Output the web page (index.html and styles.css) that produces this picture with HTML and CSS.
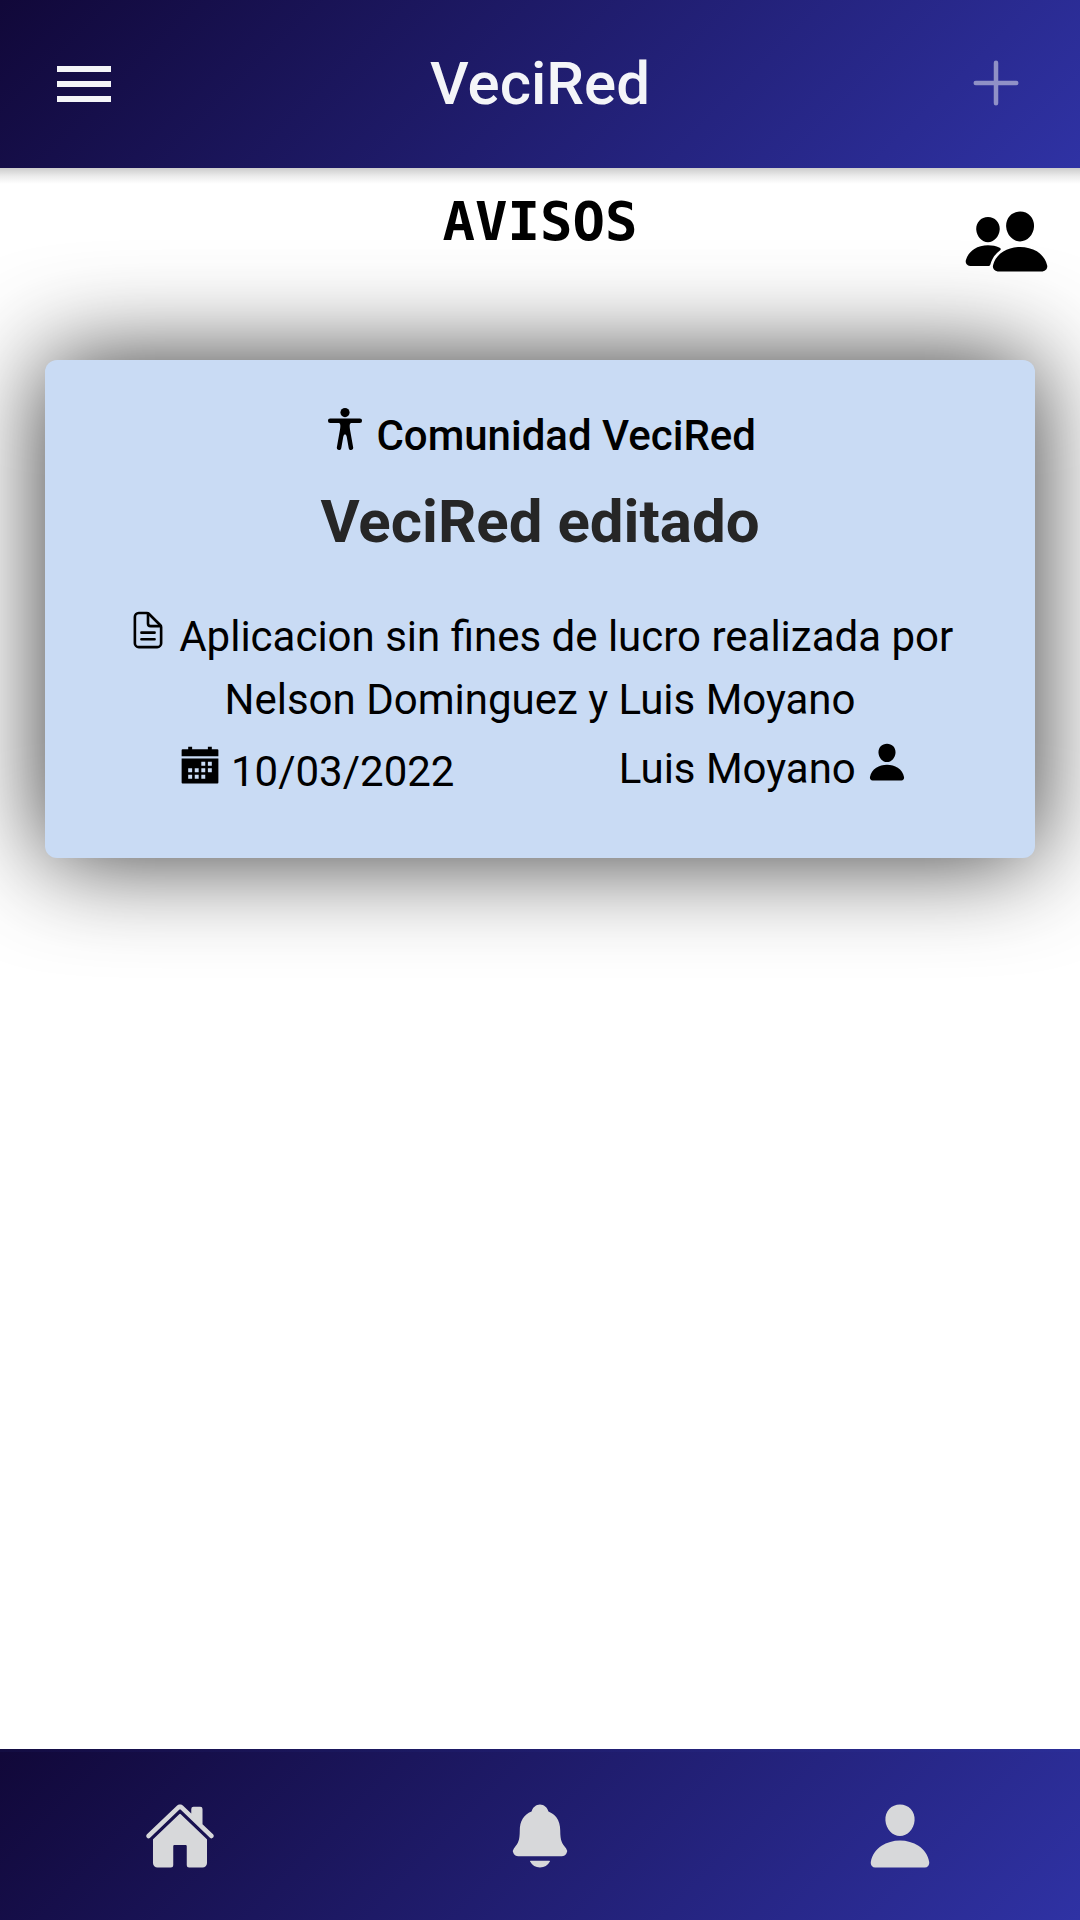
FILE: index.html
```html
<!DOCTYPE html>
<html lang="es">
<head>
<meta charset="utf-8">
<meta name="viewport" content="width=device-width, initial-scale=1">
<title>VeciRed</title>
<link rel="stylesheet" href="styles.css">
</head>
<body>
<header class="toolbar">
  <button class="toolbar-button" type="button" aria-label="Menú">
    <svg class="icon-large" viewBox="0 0 72 72" aria-hidden="true"><path d="M9 18h54v6H9zM9 33h54v6H9zM9 48h54v6H9z"/></svg>
  </button>
  <div class="brand">VeciRed</div>
  <button class="toolbar-button add-button" type="button" aria-label="Agregar">
    <svg class="icon-large" viewBox="0 0 512 512" aria-hidden="true"><path class="outline" d="M256 104v288M400 248H112"/></svg>
  </button>
</header>

<main class="content">
  <div class="page-heading">
    <h1 class="page-title">AVISOS</h1>
    <button class="people-button" type="button" aria-label="Comunidades">
      <svg class="people-icon" viewBox="0 0 512 512" aria-hidden="true"><path d="M336 256c-20.56 0-40.44-9.18-56-25.84-15.13-16.25-24.37-37.92-26-61-1.74-24.62 5.77-47.26 21.14-63.76S312 80 336 80c23.83 0 45.38 9.06 60.7 25.52 15.47 16.62 23 39.22 21.26 63.63-1.67 23.11-10.9 44.77-26 61C376.44 246.82 356.57 256 336 256zM467.83 432H204.18a27.71 27.71 0 01-22-10.67 30.22 30.22 0 01-5.26-25.79c8.42-33.81 29.28-61.85 60.32-81.08C264.79 297.4 299.86 288 336 288c36.85 0 71 9 98.71 26.05 31.11 19.13 52 47.33 60.38 81.55a30.27 30.27 0 01-5.32 25.78A27.68 27.68 0 01467.83 432zM147 260c-35.19 0-66.13-32.72-69-72.93-1.42-20.6 5-39.65 18-53.62 12.86-13.83 31-21.45 51-21.45s38 7.66 50.93 21.57c13.1 14.08 19.5 33.09 18 53.52-2.87 40.2-33.8 72.91-68.93 72.91zM212.66 291.45c-17.59-8.6-40.42-12.9-65.65-12.9-29.46 0-58.07 7.68-80.57 21.62-25.51 15.83-42.67 38.88-49.6 66.71a27.39 27.39 0 004.79 23.36A25.32 25.32 0 0041.72 400h111a8 8 0 007.87-6.57c.11-.63.25-1.26.41-1.88 8.48-34.06 28.35-62.84 57.71-83.82a8 8 0 00-.63-13.39c-1.57-.92-3.37-1.89-5.42-2.89z"/></svg>
    </button>
  </div>

  <article class="card">
    <p class="card-community"><svg class="icon" viewBox="0 0 512 512" aria-hidden="true"><circle cx="256" cy="56" r="56"/><path d="M437 128H75a27 27 0 000 54h101.88c6.91 0 15 3.09 19.58 15 5.35 13.83 2.73 40.54-.57 61.23l-4.32 24.45a.42.42 0 01-.12.35l-34.6 196.81A27.43 27.43 0 00179 511.58a27.06 27.06 0 0031.42-22.29l23.91-136.8S242 320 256 320c14.23 0 21.74 32.49 21.74 32.49l23.92 136.92a27.24 27.24 0 1053.62-9.6L320.66 283a.45.45 0 00-.11-.35l-4.33-24.45c-3.3-20.69-5.92-47.4-.57-61.23 4.56-11.88 12.91-15 19.26-15H437a27 27 0 000-54z"/></svg> Comunidad VeciRed</p>
    <h2 class="card-title">VeciRed editado</h2>
    <p class="card-text"><svg class="icon" viewBox="0 0 512 512" aria-hidden="true"><path class="outline" d="M416 221.25V416a48 48 0 01-48 48H144a48 48 0 01-48-48V96a48 48 0 0148-48h98.75a32 32 0 0122.62 9.37l141.26 141.26a32 32 0 019.37 22.62z"/><path class="outline" d="M256 56v120a32 32 0 0032 32h120M176 288h160M176 368h160"/></svg> Aplicacion sin fines de lucro realizada por Nelson Dominguez y Luis Moyano</p>
    <div class="card-meta">
      <div class="card-date"><svg class="icon" viewBox="0 0 512 512" aria-hidden="true"><path fill-rule="evenodd" d="M112 32h48v32h192V32h48v32h68a12 12 0 0112 12v72H32V76a12 12 0 0112-12h68zM32 176h448v292a12 12 0 01-12 12H44a12 12 0 01-12-12zM272 216v48h48v-48zM352 216v48h48v-48zM112 296v48h48v-48zM192 296v48h48v-48zM272 296v48h48v-48zM352 296v48h48v-48zM112 376v48h48v-48zM192 376v48h48v-48zM272 376v48h48v-48z"/></svg> <time datetime="2022-03-10">10/03/2022</time></div>
      <div class="card-author">Luis Moyano <svg class="icon" viewBox="0 0 512 512" aria-hidden="true"><path d="M332.64 64.58C313.18 43.57 286 32 256 32c-30.16 0-57.43 11.5-76.8 32.38-19.58 21.11-29.12 49.8-26.88 80.78C156.76 206.28 203.27 256 256 256s99.16-49.71 103.67-110.82c2.27-30.7-7.33-59.33-27.03-80.6zM432 480H80a31 31 0 01-24.2-11.13c-6.5-7.77-9.12-18.38-7.18-29.11C57.06 392.94 83.4 353.61 124.8 326c36.78-24.51 83.37-38 131.2-38s94.42 13.5 131.2 38c41.4 27.6 67.74 66.93 76.18 113.75 1.94 10.73-.68 21.34-7.18 29.11A31 31 0 01432 480z"/></svg></div>
    </div>
  </article>
</main>

<nav class="tabs" aria-label="Principal">
  <a class="tab" href="#inicio" aria-label="Inicio">
    <svg class="icon-large" viewBox="0 0 512 512" aria-hidden="true"><path d="M261.56 101.28a8 8 0 00-11.06 0L66.4 277.15a8 8 0 00-2.47 5.79L63.9 448a32 32 0 0032 32H192a16 16 0 0016-16V328a8 8 0 018-8h80a8 8 0 018 8v136a16 16 0 0016 16h96.06a32 32 0 0032-32V282.94a8 8 0 00-2.47-5.79z"/><path d="M490.91 244.15l-74.8-71.56V64a16 16 0 00-16-16h-48a16 16 0 00-16 16v32l-57.92-55.38C272.77 35.14 264.71 32 256 32c-8.68 0-16.72 3.14-22.14 8.63l-212.7 203.5c-6.22 6-7 15.87-1.34 22.37A16 16 0 0043 267.56L250.5 69.28a8 8 0 0111.06 0l207.52 198.28a16 16 0 0022.59-.44c6.14-6.36 5.63-16.86-.76-22.97z"/></svg>
  </a>
  <a class="tab" href="#avisos" aria-label="Avisos">
    <svg class="icon-large" viewBox="0 0 512 512" aria-hidden="true"><path d="M440.08 341.31c-1.66-2-3.29-4-4.89-5.93-22-26.61-35.31-42.67-35.31-118 0-39-9.33-71-27.72-95-13.56-17.73-31.89-31.18-56.05-41.12a3 3 0 01-.82-.67C306.6 51.49 282.82 32 256 32s-50.59 19.49-59.28 48.56a3.13 3.13 0 01-.81.65c-56.38 23.21-83.78 67.74-83.78 136.14 0 75.36-13.29 91.42-35.31 118-1.6 1.93-3.23 3.89-4.89 5.93a35.16 35.16 0 00-4.65 37.62c6.17 13 19.32 21.07 34.33 21.07H410.5c14.94 0 28-8.06 34.19-21a35.17 35.17 0 00-4.61-37.66zM256 480a80.06 80.06 0 0070.44-42.13 4 4 0 00-3.54-5.87H189.12a4 4 0 00-3.55 5.87A80.06 80.06 0 00256 480z"/></svg>
  </a>
  <a class="tab" href="#perfil" aria-label="Perfil">
    <svg class="icon-large" viewBox="0 0 512 512" aria-hidden="true"><path d="M332.64 64.58C313.18 43.57 286 32 256 32c-30.16 0-57.43 11.5-76.8 32.38-19.58 21.11-29.12 49.8-26.88 80.78C156.76 206.28 203.27 256 256 256s99.16-49.71 103.67-110.82c2.27-30.7-7.33-59.33-27.03-80.6zM432 480H80a31 31 0 01-24.2-11.13c-6.5-7.77-9.12-18.38-7.18-29.11C57.06 392.94 83.4 353.61 124.8 326c36.78-24.51 83.37-38 131.2-38s94.42 13.5 131.2 38c41.4 27.6 67.74 66.93 76.18 113.75 1.94 10.73-.68 21.34-7.18 29.11A31 31 0 01432 480z"/></svg>
  </a>
</nav>
</body>
</html>
```
FILE: styles.css
```css
*,
*::before,
*::after {
  box-sizing: border-box;
}

body {
  display: flex;
  flex-direction: column;
  min-height: 100vh;
  margin: 0;
  background: #fff;
  color: #000;
  font-family: Roboto, "Open Sans", sans-serif;
  font-size: 42px;
}

button {
  padding: 0;
  border: 0;
  background: none;
  color: inherit;
  cursor: pointer;
}

svg {
  fill: currentColor;
}

.outline {
  fill: none;
  stroke: currentColor;
  stroke-width: 32;
  stroke-linecap: round;
  stroke-linejoin: round;
}

.icon {
  width: 42px;
  height: 42px;
}

.icon-large {
  display: block;
  width: 72px;
  height: 72px;
}

.toolbar,
.tabs {
  background: linear-gradient(135deg, #110839, #2f32a4);
}

.toolbar {
  position: relative;
  z-index: 1;
  display: grid;
  grid-template-columns: 1fr auto 1fr;
  align-items: center;
  height: 168px;
  padding: 0 48px;
  color: #f4f5f8;
}

/* Soft shade that the toolbar casts on the page */
.toolbar::after {
  content: "";
  position: absolute;
  top: 100%;
  left: 0;
  right: 0;
  height: 16px;
  background: linear-gradient(rgba(0, 0, 0, 0.2), rgba(0, 0, 0, 0.08) 50%, rgba(0, 0, 0, 0));
}

.toolbar-button {
  justify-self: start;
}

.add-button {
  justify-self: end;
  opacity: 0.5;
}

.brand {
  font-size: 60px;
  font-weight: 500;
  line-height: 72px;
}

.content {
  flex: 1;
  padding: 30px 45px 120px;
}

.page-heading {
  display: grid;
  grid-template-columns: 1fr auto 1fr;
  align-items: start;
  margin: 0 -15px 75px;
}

.page-title {
  grid-column: 2;
  margin: 0;
  font-family: "DejaVu Sans Mono", "Liberation Mono", monospace;
  font-size: 54px;
  line-height: 48px;
}

.people-button {
  justify-self: end;
}

.people-icon {
  display: block;
  width: 87px;
  height: 87px;
}

.card {
  padding: 48px 48px 52px;
  border-radius: 12px;
  background: #c9dbf4;
  box-shadow: 0 0 100px rgba(0, 0, 0, 0.8);
  text-align: center;
}

.card-community {
  margin: 0 0 26px;
  font-weight: 500;
  line-height: 48px;
}

.card-title {
  margin: 0 0 47px;
  color: #262626;
  font-size: 60px;
  font-weight: 700;
  line-height: 72px;
}

.card-text {
  margin: 0 0 6px;
  line-height: 63px;
}

.card-meta {
  display: grid;
  grid-template-columns: 1fr 1fr;
  align-items: start;
}

.card-date {
  line-height: 69px;
}

.card-author {
  line-height: 63px;
}

.tabs {
  display: grid;
  grid-template-columns: repeat(3, 1fr);
  align-items: center;
  height: 171px;
  border-top: 3px solid rgba(0, 0, 0, 0.07);
  color: #d7d8da;
}

.tab {
  display: flex;
  justify-content: center;
  color: inherit;
}
```
